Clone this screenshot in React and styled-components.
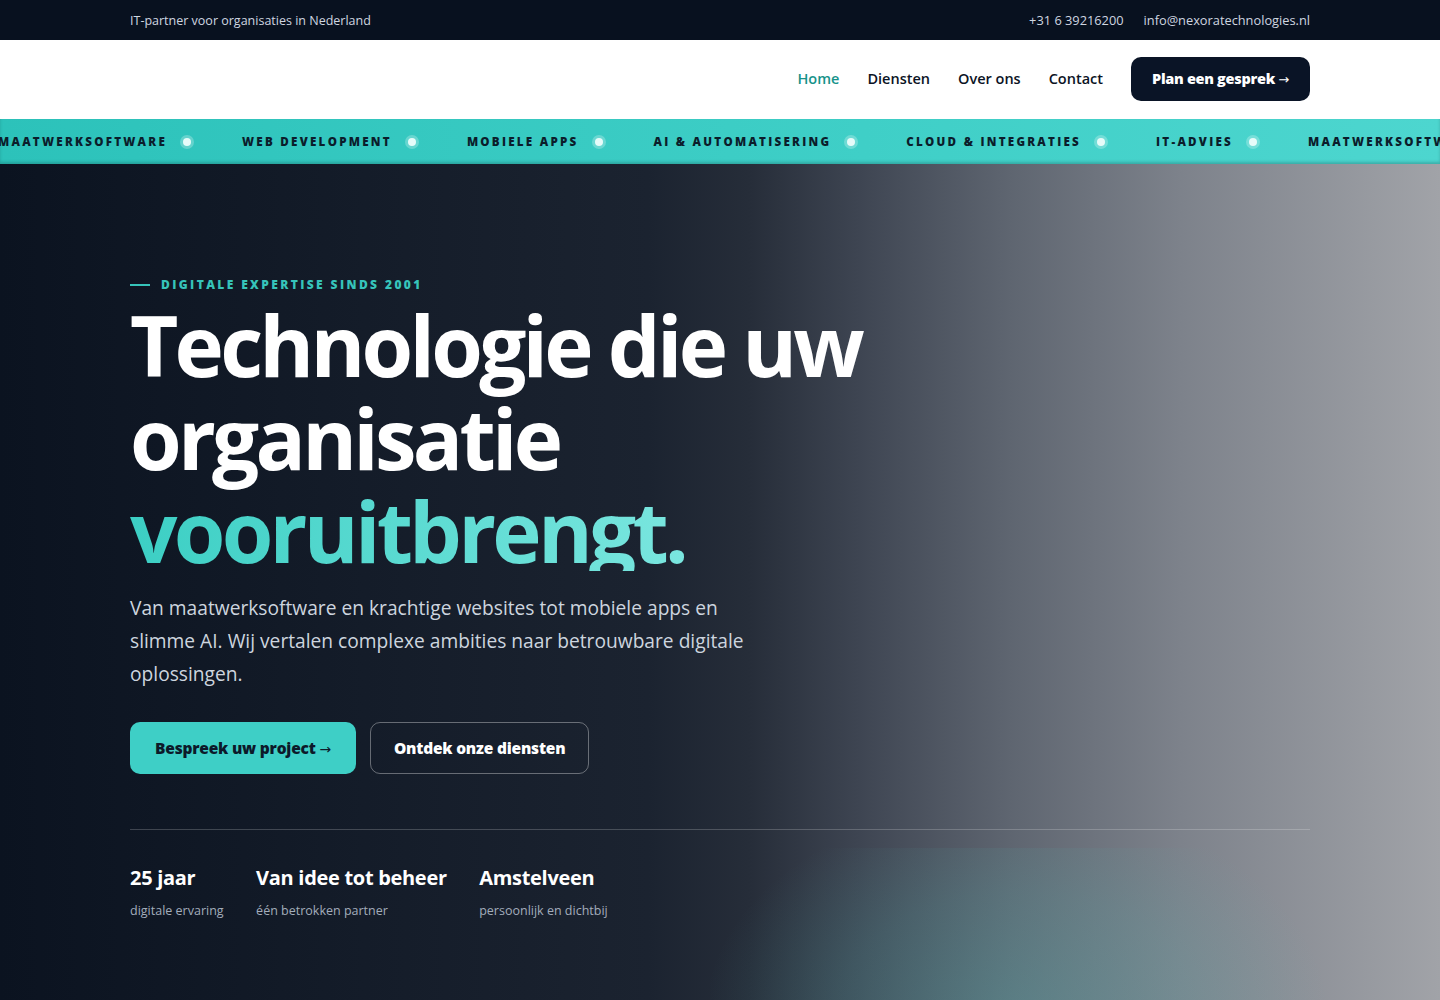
import React from "react";
import styled, { createGlobalStyle } from "styled-components";

const GlobalStyle = createGlobalStyle`
  * { box-sizing: border-box; }
  body {
    margin: 0;
    font-family: "Open Sans", "Noto Sans", sans-serif;
    background: #0b1320;
  }
`;

const tickerItems = [
  "Maatwerksoftware",
  "Web development",
  "Mobiele apps",
  "AI & automatisering",
  "Cloud & integraties",
  "IT-advies",
  "Maatwerksoftware",
  "Web development",
];

const stats = [
  { value: "25 jaar", label: "digitale ervaring" },
  { value: "Van idee tot beheer", label: "één betrokken partner" },
  { value: "Amstelveen", label: "persoonlijk en dichtbij" },
];

export default function App() {
  return (
    <Page>
      <GlobalStyle />
      <TopBar>
        <Container>
          <span>IT-partner voor organisaties in Nederland</span>
          <TopContacts>
            <span>+31 6 39216200</span>
            <span>info@nexoratechnologies.nl</span>
          </TopContacts>
        </Container>
      </TopBar>

      <Header>
        <Container>
          <div />
          <Nav>
            <NavLink $active>Home</NavLink>
            <NavLink>Diensten</NavLink>
            <NavLink>Over ons</NavLink>
            <NavLink>Contact</NavLink>
            <CtaButton>
              Plan een gesprek <Arrow>→</Arrow>
            </CtaButton>
          </Nav>
        </Container>
      </Header>

      <Ticker>
        <TickerTrack>
          {tickerItems.map((item, i) => (
            <TickerItem key={i}>
              {item}
              <TickerDot />
            </TickerItem>
          ))}
        </TickerTrack>
      </Ticker>

      <Hero>
        <Glow />
        <HeroInner>
          <Eyebrow>Digitale expertise sinds 2001</Eyebrow>
          <Title>
            Technologie die uw
            <br />
            organisatie
            <br />
            <Accent>vooruitbrengt.</Accent>
          </Title>
          <Lead>
            Van maatwerksoftware en krachtige websites tot mobiele apps en
            slimme AI. Wij vertalen complexe ambities naar betrouwbare digitale
            oplossingen.
          </Lead>
          <Actions>
            <PrimaryButton>
              Bespreek uw project <Arrow>→</Arrow>
            </PrimaryButton>
            <GhostButton>Ontdek onze diensten</GhostButton>
          </Actions>
          <Stats>
            {stats.map((s) => (
              <Stat key={s.value}>
                <StatValue>{s.value}</StatValue>
                <StatLabel>{s.label}</StatLabel>
              </Stat>
            ))}
          </Stats>
        </HeroInner>
      </Hero>
    </Page>
  );
}

const Page = styled.div`
  min-height: 1000px;
  overflow: hidden;
`;

const Container = styled.div`
  width: 1180px;
  margin: 0 auto;
  display: flex;
  align-items: center;
  justify-content: space-between;
  height: 100%;
`;

const TopBar = styled.div`
  height: 40px;
  background: #08111f;
  color: #cfd6e0;
  font-size: 12.5px;
`;

const TopContacts = styled.div`
  display: flex;
  gap: 20px;
  font-size: 12.8px;
`;

const Header = styled.header`
  height: 79px;
  padding-bottom: 2px;
  background: #ffffff;
`;

const Nav = styled.nav`
  display: flex;
  align-items: center;
  gap: 28px;
`;

const NavLink = styled.a`
  font-size: 14.5px;
  font-weight: 600;
  color: ${(p) => (p.$active ? "#17938a" : "#0b1324")};
  cursor: pointer;
`;

const Arrow = styled.span`
  font-family: "DejaVu Sans", sans-serif;
  font-weight: 400;
  font-size: 0.9em;
`;

const CtaButton = styled.button`
  height: 44px;
  padding: 0 21px;
  border: none;
  border-radius: 10px;
  background: #0a1426;
  color: #ffffff;
  font-family: inherit;
  font-size: 14.5px;
  font-weight: 800;
  letter-spacing: -0.3px;
  cursor: pointer;
`;

const Ticker = styled.div`
  height: 45px;
  background: linear-gradient(90deg, #2cc2ba 0%, #3fcfc7 60%, #4dd6cf 100%);
  display: flex;
  align-items: center;
  overflow: hidden;
  box-shadow: inset 0 -2px 3px rgba(10, 60, 60, 0.25);
`;

const TickerTrack = styled.div`
  display: flex;
  white-space: nowrap;
  transform: translateX(-2px);
`;

const TickerItem = styled.span`
  display: flex;
  align-items: center;
  gap: 16px;
  margin-right: 51px;
  font-size: 11.6px;
  font-weight: 800;
  letter-spacing: 0.195em;
  text-transform: uppercase;
  color: #0b1d2b;
`;

const TickerDot = styled.i`
  width: 8px;
  height: 8px;
  border-radius: 50%;
  background: #e6fbf9;
  box-shadow: 0 0 0 3px rgba(255, 255, 255, 0.25);
`;

const Hero = styled.section`
  position: relative;
  height: 836px;
  background: linear-gradient(
    90deg,
    #0b1320 0%,
    #1b2330 45%,
    #262d39 52%,
    #3f4653 60%,
    #5e6570 70%,
    #7d828b 82%,
    #a1a3a8 100%
  );
  overflow: hidden;
`;

const Glow = styled.div`
  position: absolute;
  left: 710px;
  top: 684px;
  width: 730px;
  height: 200px;
  background: radial-gradient(
    ellipse 55% 140% at 42% 85%,
    rgba(80, 185, 180, 0.3) 0%,
    rgba(80, 185, 180, 0.16) 45%,
    rgba(80, 185, 180, 0) 78%
  );
  pointer-events: none;
`;

const HeroInner = styled.div`
  position: relative;
  width: 1180px;
  margin: 0 auto;
  padding-top: 112px;
`;

const Eyebrow = styled.div`
  display: flex;
  align-items: center;
  gap: 11px;
  font-size: 12px;
  font-weight: 800;
  letter-spacing: 0.2em;
  text-transform: uppercase;
  color: #36c4ba;

  &::before {
    content: "";
    width: 20px;
    height: 2px;
    background: #36c4ba;
  }
`;

const Title = styled.h1`
  margin: 5px 0 0;
  font-size: 83.5px;
  line-height: 93px;
  font-weight: 700;
  letter-spacing: -0.045em;
  color: #ffffff;
`;

const Accent = styled.span`
  display: inline-block;
  vertical-align: top;
  line-height: 93px;
  height: 87px;
  overflow: hidden;
  background: linear-gradient(90deg, #3ccfc4 0%, #7ae6df 100%);
  -webkit-background-clip: text;
  background-clip: text;
  color: transparent;
`;

const Lead = styled.p`
  margin: 14px 0 0;
  max-width: 640px;
  font-size: 19.2px;
  line-height: 33px;
  color: #cdd5df;
`;

const Actions = styled.div`
  display: flex;
  gap: 14px;
  margin-top: 32px;
`;

const PrimaryButton = styled.button`
  height: 52px;
  padding: 0 25px;
  border: none;
  border-radius: 10px;
  background: #3ecfc6;
  color: #0c1a2a;
  font-family: inherit;
  font-size: 15.5px;
  font-weight: 800;
  letter-spacing: -0.2px;
  cursor: pointer;
`;

const GhostButton = styled(PrimaryButton)`
  padding: 0 23px;
  background: transparent;
  border: 1px solid rgba(255, 255, 255, 0.35);
  color: #ffffff;
`;

const Stats = styled.div`
  display: flex;
  gap: 32.5px;
  margin-top: 55px;
  padding-top: 34px;
  border-top: 1px solid rgba(255, 255, 255, 0.2);
`;

const Stat = styled.div`
  display: flex;
  flex-direction: column;
  gap: 11px;
`;

const StatValue = styled.div`
  font-size: 20px;
  font-weight: 700;
  letter-spacing: -0.3px;
  color: #ffffff;
`;

const StatLabel = styled.div`
  font-size: 12.5px;
  color: #a3adbb;
`;
